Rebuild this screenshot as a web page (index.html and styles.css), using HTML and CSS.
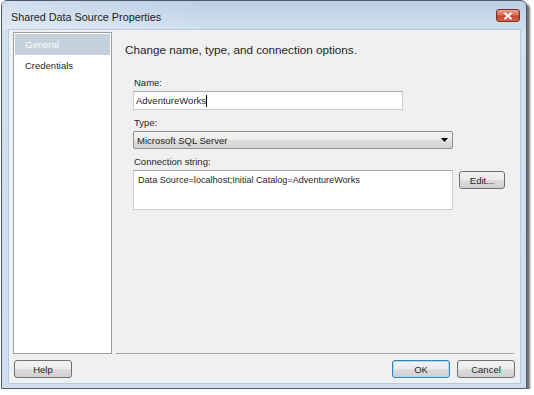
FILE: index.html
```html
<!DOCTYPE html>
<html lang="en">
<head>
    <meta charset="UTF-8">
    <title>Shared Data Source Properties</title>
    <link rel="stylesheet" href="styles.css">
</head>
<body>
<div class="window">
    <div class="titlebar">
        <span class="title">Shared Data Source Properties</span>
        <span class="close">
            <svg width="10" height="8" viewBox="0 0 10 8"><path d="M1.5 1 L8.5 7 M8.5 1 L1.5 7" stroke="#fff" stroke-width="2"/></svg>
        </span>
    </div>
    <div class="client">
        <div class="main">
            <ul class="nav">
                <li class="active">General</li>
                <li>Credentials</li>
            </ul>
            <div class="page">
                <h1>Change name, type, and connection options.</h1>
                <div class="form">
                    <label>Name:</label>
                    <div class="textbox name-box">AdventureWorks<span class="caret"></span></div>
                    <label>Type:</label>
                    <div class="combo">
                        <span>Microsoft SQL Server</span>
                        <svg width="7" height="4" viewBox="0 0 7 4"><path d="M0 0 H7 L3.5 4 Z" fill="#000"/></svg>
                    </div>
                    <label>Connection string:</label>
                    <div class="conn-row">
                        <div class="textbox conn-box">Data Source=localhost;Initial Catalog=AdventureWorks</div>
                        <button class="btn edit-btn">Edit...</button>
                    </div>
                </div>
            </div>
        </div>
        <div class="footer">
            <button class="btn">Help</button>
            <span class="spacer"></span>
            <button class="btn default">OK</button>
            <button class="btn">Cancel</button>
        </div>
    </div>
</div>
</body>
</html>
```

FILE: styles.css
```css
body {
    margin: 0;
    background: #ffffff;
    font-family: "Liberation Sans", Arial, sans-serif;
    font-size: 9.5px;
    color: #1e1e1e;
}

.window {
    margin-left: 1px;
    width: 524px;
    height: 387px;
    border: 1px solid #4d5a66;
    border-radius: 6px 6px 0 0;
    background: linear-gradient(to bottom, #b9cee5 0%, #d3e1f0 8%, #cfdff0 100%);
    box-shadow: 3px 3px 2px rgba(0, 0, 0, 0.55);
    display: flex;
    flex-direction: column;
}

.titlebar {
    height: 28px;
    display: flex;
    align-items: flex-start;
    padding-left: 9px;
    background: linear-gradient(to right, rgba(255, 255, 255, 0.35), rgba(255, 255, 255, 0) 40%);
}

.title {
    font-size: 10.8px;
    color: #1b1b1b;
    margin-top: 10px;
}

.close {
    margin-left: auto;
    margin-right: 6px;
    margin-top: 8px;
    width: 24px;
    height: 13px;
    box-sizing: border-box;
    border: 1px solid #7a2f22;
    border-radius: 3px;
    background: linear-gradient(to bottom, #e9a592 0%, #d6705a 45%, #c2432c 55%, #d7674e 100%);
    display: flex;
    align-items: center;
    justify-content: center;
}

.client {
    flex: 1;
    margin: 0 5px 4px 6px;
    padding: 2px 6px 0 4px;
    background: #f0f0f0;
    border: 1px solid #b7c9dc;
    box-sizing: border-box;
    display: flex;
    flex-direction: column;
}

.main {
    height: 322px;
    display: flex;
    gap: 4px;
}

.nav {
    list-style: none;
    margin: 0;
    padding: 1px;
    width: 99px;
    box-sizing: border-box;
    background: #ffffff;
    border: 1px solid #9a9fa6;
}

.nav li {
    height: 21px;
    line-height: 21px;
    padding-left: 10px;
}

.nav li.active {
    background: #c4d0dc;
    color: #ffffff;
}

.page {
    flex: 1;
    border-bottom: 1px solid #a8a8a8;
    padding: 10px 0 0 9px;
}

h1 {
    margin: 0 0 19px;
    font-size: 11.7px;
    font-weight: normal;
    line-height: 16px;
    color: #1e1e1e;
}

.form {
    margin-left: 8px;
    display: flex;
    flex-direction: column;
    align-items: flex-start;
}

label {
    display: block;
    line-height: 12px;
    margin: 0 0 2px 1px;
}

.textbox {
    box-sizing: border-box;
    background: #ffffff;
    border: 1px solid #c8cdd4;
    border-top-color: #a5aab2;
}

.name-box {
    width: 270px;
    height: 19px;
    line-height: 17px;
    padding-left: 2px;
    margin-bottom: 7px;
    display: flex;
    align-items: center;
}

.caret {
    width: 1px;
    height: 12px;
    background: #000;
}

.combo {
    width: 320px;
    height: 18px;
    box-sizing: border-box;
    border: 1px solid #8e8f8f;
    border-radius: 2px;
    background: linear-gradient(to bottom, #f4f4f4 0%, #ececec 50%, #dedede 51%, #d4d4d4 100%);
    display: flex;
    align-items: center;
    justify-content: space-between;
    padding: 0 4px 0 3px;
    margin-bottom: 7px;
}

.conn-row {
    display: flex;
    align-items: flex-start;
    gap: 6px;
}

.conn-box {
    width: 320px;
    height: 40px;
    padding: 4px 0 0 4px;
    font-size: 9.1px;
}

.btn {
    font-family: inherit;
    font-size: 9.5px;
    color: #1e1e1e;
    height: 18px;
    padding: 0;
    box-sizing: border-box;
    border: 1px solid #707070;
    border-radius: 3px;
    background: linear-gradient(to bottom, #f2f2f2 0%, #ebebeb 50%, #dddddd 51%, #cfcfcf 100%);
}

.edit-btn {
    width: 46px;
    margin-top: 1px;
}

.footer {
    display: flex;
    gap: 7px;
    padding-top: 6px;
    margin: 0 -1px 0 1px;
}

.footer .btn {
    width: 58px;
}

.spacer {
    flex: 1;
}

.btn.default {
    border-color: #3c7fb1;
    box-shadow: inset 0 0 0 1px #a9d9f5;
}
```
